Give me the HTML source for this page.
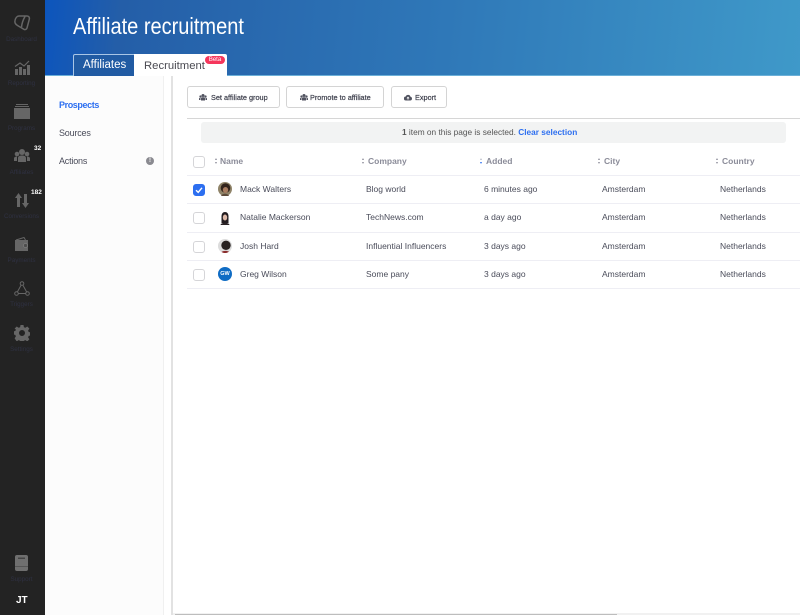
<!DOCTYPE html>
<html><head><meta charset="utf-8">
<style>
html,body{margin:0;padding:0;width:800px;height:615px;overflow:hidden;background:#fff;font-family:"Liberation Sans",sans-serif;color:#3f4254}
div,span,svg{position:absolute}
#w{left:0;top:0;width:800px;height:615px;overflow:hidden;filter:blur(.3px)}
.t{white-space:nowrap}
#side{left:0;top:0;width:45px;height:615px;background:#232323}
.lab{left:0;width:43px;text-align:center;font-size:6.3px;color:#2f3142;white-space:nowrap}
.ic{fill:#666}
.bdg{color:#fff;font-size:6.5px;font-weight:bold;white-space:nowrap}
.btn{top:86px;height:20px;border:1px solid #d4d4d4;border-radius:3px;background:#fff;font-size:7.3px;color:#3f414e;line-height:21px;-webkit-text-stroke:.2px #3f414e}
.hd{top:156px;font-size:8.5px;font-weight:bold;color:#8b8c99;white-space:nowrap}
.sort{top:158px;width:3px;height:6px}
.sort:before,.sort:after{content:"";position:absolute;left:0;border-left:1.5px solid transparent;border-right:1.5px solid transparent}
.sort:before{top:0;border-bottom:2px solid #8b8c99}
.sort:after{bottom:0;border-top:2px solid #8b8c99}
.sort.a:before{border-bottom-color:#b9bcc7}
.sort.a:after{border-top-color:#2d6ff0}
.cb{left:193px;width:10px;height:10px;border:1px solid #d5d5d8;border-radius:3px;background:#fff}
.row{left:187px;width:613px;height:1px;background:#eeeef4}
.c{font-size:8.5px;color:#4a4c5a;white-space:nowrap}
.menu{font-size:9px;letter-spacing:-.2px;color:#4a4c5a;white-space:nowrap}
</style></head><body><div id="w">

<div id="hdr" style="left:45px;top:0;width:755px;height:76px;background:linear-gradient(96deg,#0c55bd 0%,#245ea8 10%,#2f78b8 53%,#3f99c9 100%)"></div>
<div style="left:45px;top:75px;width:755px;height:1px;background:#6cb0d8"></div>
<div class="t" style="left:73px;top:13px;font-size:23px;color:#fff;transform:scaleX(.87);transform-origin:0 0">Affiliate recruitment</div>

<div style="left:73px;top:54px;width:60px;height:22px;border:1px solid #a9c6e6;border-bottom:0;border-radius:2px 0 0 0;background:#215ba3"></div>
<div class="t" style="left:83px;top:59px;font-size:11.5px;color:#fff">Affiliates</div>
<div style="left:134px;top:54px;width:93px;height:22px;background:#fff;border-radius:0 2px 0 0"></div>
<div class="t" style="left:144px;top:60px;font-size:11.3px;color:#4a4a52">Recruitment</div>
<div class="t" style="left:205px;top:56px;width:20px;height:8px;background:#f5365c;border-radius:4px;color:#fff;font-size:6px;line-height:8px;text-align:center">Beta</div>

<div style="left:45px;top:76px;width:119px;height:539px;background:#fcfcfc"></div>
<div style="left:163px;top:76px;width:1px;height:539px;background:#f0f0f0"></div>
<div style="left:171px;top:76px;width:2px;height:539px;background:#e2e2e2"></div>

<div class="menu" style="left:59px;top:100px;color:#2d6ff0;font-weight:bold;letter-spacing:-.4px">Prospects</div>
<div class="menu" style="left:59px;top:128px">Sources</div>
<div class="menu" style="left:59px;top:156px">Actions</div>
<div style="left:146px;top:157px;width:8px;height:8px;border-radius:50%;background:#8a8a90;color:#fff;font-size:6px;line-height:8px;text-align:center;font-weight:bold">!</div>

<!-- sidebar -->
<div id="side"></div>
<svg style="left:13px;top:14px" width="18" height="18" viewBox="0 0 18 18"><path d="M6 2h8c1.800 0 2.800 1.500 2.300 3.300L14 14c-.5 1.500-2 2-3.200 1.200L4.500 11.500C2.500 10.300 1.500 8.500 2 6.500 2.500 4 4 2 6 2zM12 2.500C10 6 9 8.500 8.500 13" fill="none" stroke="#666" stroke-width="1.500"/></svg>
<div class="lab" style="top:35.5px">Dashboard</div>
<svg style="left:14px;top:60px" width="16" height="16" viewBox="0 0 16 16"><path class="ic" d="M1 9h3v6H1zM5 7h3v8H5zM9 9h3v6H9zM13 5h3v10h-3z"/><path d="M1 6.500 6 3l4 3 5-5" fill="none" stroke="#666" stroke-width="1.200"/></svg>
<div class="lab" style="top:80px">Reporting</div>
<svg style="left:14px;top:104px" width="16" height="16" viewBox="0 0 16 16"><path class="ic" d="M2 0h12v1H2zM1 2h14v1H1zM0 4h16v11H0z"/></svg>
<div class="lab" style="top:124.5px">Programs</div>
<svg style="left:14px;top:149px" width="16" height="14" viewBox="0 0 16 14"><circle class="ic" cx="8" cy="3" r="3"/><circle class="ic" cx="3" cy="5" r="2.300"/><circle class="ic" cx="13" cy="5" r="2.300"/><path class="ic" d="M4 13V9c0-2 2-2.500 4-2.500s4 .5 4 2.500v4zM0 12V9.500C0 8 1.500 7.500 3 7.500V12zM16 12V9.500C16 8 14.500 7.500 13 7.500V12z"/></svg>
<div class="bdg" style="left:34px;top:145px">32</div>
<div class="lab" style="top:168.5px">Affiliates</div>
<svg style="left:15px;top:193px" width="14" height="15" viewBox="0 0 14 15"><path class="ic" d="M3.500 0 7 5H5v9H2V5H0zM10.500 15 7 10h2V1h3v9h2z"/></svg>
<div class="bdg" style="left:31px;top:189px">182</div>
<div class="lab" style="top:212.5px">Conversions</div>
<svg style="left:15px;top:237px" width="14" height="14" viewBox="0 0 14 14"><path class="ic" d="M0 3h13v11H0z"/><path d="M1 3 9 .5 10.500 3" fill="none" stroke="#666"/><circle cx="10.500" cy="8.500" r="2" fill="#4d4d4d" stroke="#8a8a8a" stroke-width=".5"/></svg>
<div class="lab" style="top:256.5px">Payments</div>
<svg style="left:14px;top:281px" width="16" height="15" viewBox="0 0 16 15"><path d="M8 2.500 2.500 12.500h11z" fill="none" stroke="#666" stroke-width="1"/><circle cx="8" cy="2.500" r="1.800" fill="#232323" stroke="#666"/><circle cx="2.500" cy="12.500" r="1.800" fill="#232323" stroke="#666"/><circle cx="13.500" cy="12.500" r="1.800" fill="#232323" stroke="#666"/></svg>
<div class="lab" style="top:300.5px">Triggers</div>
<svg style="left:14px;top:325px" width="16" height="16" viewBox="0 0 16 16"><path class="ic" fill-rule="evenodd" d="M6.500 0h3l.4 2.200 1.500.6L13.300 1.500l2.100 2.100-1.300 1.900.6 1.500 2.300.5v3l-2.300.4-.6 1.500 1.300 1.900-2.100 2.100-1.900-1.300-1.500.6-.4 2.300h-3l-.4-2.300-1.500-.6-1.900 1.300L.6 13.300l1.300-1.900-.6-1.500L-1 9.500v-3l2.300-.5.6-1.500L.6 3.600 2.700 1.500l1.900 1.300 1.500-.6zM8 5a3 3 0 1 0 0 6 3 3 0 0 0 0-6z"/></svg>
<div class="lab" style="top:345.5px">Settings</div>
<svg style="left:15px;top:555px" width="13" height="16" viewBox="0 0 13 16"><rect width="13" height="16" rx="2" fill="#6f6f6f"/><rect x="3" y="2.500" width="7" height="1.500" fill="#444"/><rect y="11" width="13" height="1" fill="#555"/></svg>
<div class="lab" style="top:575.5px">Support</div>
<div class="t" style="left:16px;top:595px;font-size:10px;font-weight:bold;color:#fff">JT</div>

<!-- buttons -->
<div class="btn" style="left:187px;width:91px">
  <svg style="left:11px;top:7px" width="8" height="7" viewBox="0 0 16 14"><circle fill="#50525f" cx="8" cy="3" r="3"/><circle fill="#50525f" cx="3" cy="5" r="2.300"/><circle fill="#50525f" cx="13" cy="5" r="2.300"/><path fill="#50525f" d="M4 13V9c0-2 2-2.500 4-2.500s4 .5 4 2.500v4zM0 12V9.500C0 8 1.500 7.500 3 7.500V12zM16 12V9.500C16 8 14.500 7.500 13 7.500V12z"/></svg>
  <span class="t" style="left:23px;top:0">Set affiliate group</span></div>
<div class="btn" style="left:286px;width:96px">
  <svg style="left:13px;top:7px" width="8" height="7" viewBox="0 0 16 14"><circle fill="#50525f" cx="8" cy="3" r="3"/><circle fill="#50525f" cx="3" cy="5" r="2.300"/><circle fill="#50525f" cx="13" cy="5" r="2.300"/><path fill="#50525f" d="M4 13V9c0-2 2-2.500 4-2.500s4 .5 4 2.500v4zM0 12V9.500C0 8 1.500 7.500 3 7.500V12zM16 12V9.500C16 8 14.500 7.500 13 7.500V12z"/></svg>
  <span class="t" style="left:23px;top:0">Promote to affiliate</span></div>
<div class="btn" style="left:391px;width:54px">
  <svg style="left:12px;top:7px" width="8" height="7" viewBox="0 0 16 14"><path fill="#50525f" d="M4 13a4 4 0 0 1-.5-8A5 5 0 0 1 13 5.500 3.800 3.800 0 0 1 12.500 13z"/><path fill="#fff" d="M8 5l3 3.500H9V11H7V8.500H5z"/></svg>
  <span class="t" style="left:23px;top:0">Export</span></div>

<div style="left:187px;top:118px;width:613px;height:1px;background:#d6d6d6"></div>
<div style="left:201px;top:122px;width:585px;height:21px;background:#f2f3f3;border-radius:3px"></div>
<div class="t" style="left:402px;top:127px;font-size:8.3px;color:#555"><b style="position:static">1</b> item on this page is selected. <b style="color:#2d6ff0;position:static">Clear selection</b></div>

<!-- header row -->
<div class="cb" style="top:156px"></div>
<div class="sort" style="left:215px"></div><div class="hd" style="left:220px">Name</div>
<div class="sort" style="left:362px"></div><div class="hd" style="left:368px">Company</div>
<div class="sort a" style="left:480px"></div><div class="hd" style="left:486px">Added</div>
<div class="sort" style="left:598px"></div><div class="hd" style="left:604px">City</div>
<div class="sort" style="left:716px"></div><div class="hd" style="left:722px">Country</div>
<div class="row" style="top:175px"></div>
<div class="row" style="top:203px"></div>
<div class="row" style="top:232px"></div>
<div class="row" style="top:260px"></div>
<div class="row" style="top:288px"></div>

<!-- row 1 -->
<div class="cb" style="top:184px;background:#2d6ff0;border-color:#2d6ff0"></div>
<svg style="left:195px;top:186px" width="8" height="8" viewBox="0 0 8 8"><path d="M1 4.200 3.200 6.300 7 1.800" fill="none" stroke="#fff" stroke-width="1.400"/></svg>
<svg style="left:218px;top:182px" width="14" height="14" viewBox="0 0 14 14"><circle cx="7" cy="7" r="7" fill="#8f8368"/><circle cx="7.500" cy="6" r="4.800" fill="#33241c"/><ellipse cx="7.500" cy="8" rx="2.700" ry="3" fill="#a87c60"/><path d="M3 14c1-3 7-3 8 0z" fill="#5d4a3a"/></svg>
<div class="c" style="left:240px;top:184px">Mack Walters</div>
<div class="c" style="left:366px;top:184px">Blog world</div>
<div class="c" style="left:484px;top:184px">6 minutes ago</div>
<div class="c" style="left:602px;top:184px">Amsterdam</div>
<div class="c" style="left:720px;top:184px">Netherlands</div>
<!-- row 2 -->
<div class="cb" style="top:212px"></div>
<svg style="left:218px;top:211px" width="14" height="14" viewBox="0 0 14 14"><path d="M3.500 12V5.500C3.500 2.500 5 1 7 1s3.500 1.500 3.500 4.500V12z" fill="#221c20"/><ellipse cx="7" cy="6.500" rx="2.200" ry="3" fill="#dcb8a8"/><path d="M2.500 14c.5-3 8.500-3 9 0z" fill="#2a2326"/></svg>
<div class="c" style="left:240px;top:212px">Natalie Mackerson</div>
<div class="c" style="left:366px;top:212px">TechNews.com</div>
<div class="c" style="left:484px;top:212px">a day ago</div>
<div class="c" style="left:602px;top:212px">Amsterdam</div>
<div class="c" style="left:720px;top:212px">Netherlands</div>
<!-- row 3 -->
<div class="cb" style="top:241px"></div>
<svg style="left:218px;top:239px" width="14" height="14" viewBox="0 0 14 14"><circle cx="7" cy="7" r="7" fill="#dcdcdc"/><circle cx="8" cy="6.300" r="4.700" fill="#272120"/><path d="M3.500 13c2-1.500 5.500-1.500 7.500-.2A7 7 0 0 1 3.500 13z" fill="#8a2c2c"/></svg>
<div class="c" style="left:240px;top:241px">Josh Hard</div>
<div class="c" style="left:366px;top:241px">Influential Influencers</div>
<div class="c" style="left:484px;top:241px">3 days ago</div>
<div class="c" style="left:602px;top:241px">Amsterdam</div>
<div class="c" style="left:720px;top:241px">Netherlands</div>
<!-- row 4 -->
<div class="cb" style="top:269px"></div>
<div style="left:218px;top:267px;width:14px;height:14px;border-radius:50%;background:#0f6cc4;color:#fff;font-size:5.5px;font-weight:bold;line-height:14px;text-align:center">GW</div>
<div class="c" style="left:240px;top:269px">Greg Wilson</div>
<div class="c" style="left:366px;top:269px">Some pany</div>
<div class="c" style="left:484px;top:269px">3 days ago</div>
<div class="c" style="left:602px;top:269px">Amsterdam</div>
<div class="c" style="left:720px;top:269px">Netherlands</div>

<!-- scrollbar -->
<div style="left:173px;top:613px;width:627px;height:2px;background:#f1f1f1"></div>
<div style="left:175px;top:614px;width:442px;height:1px;background:#bdbdbd"></div>
</div></body></html>
